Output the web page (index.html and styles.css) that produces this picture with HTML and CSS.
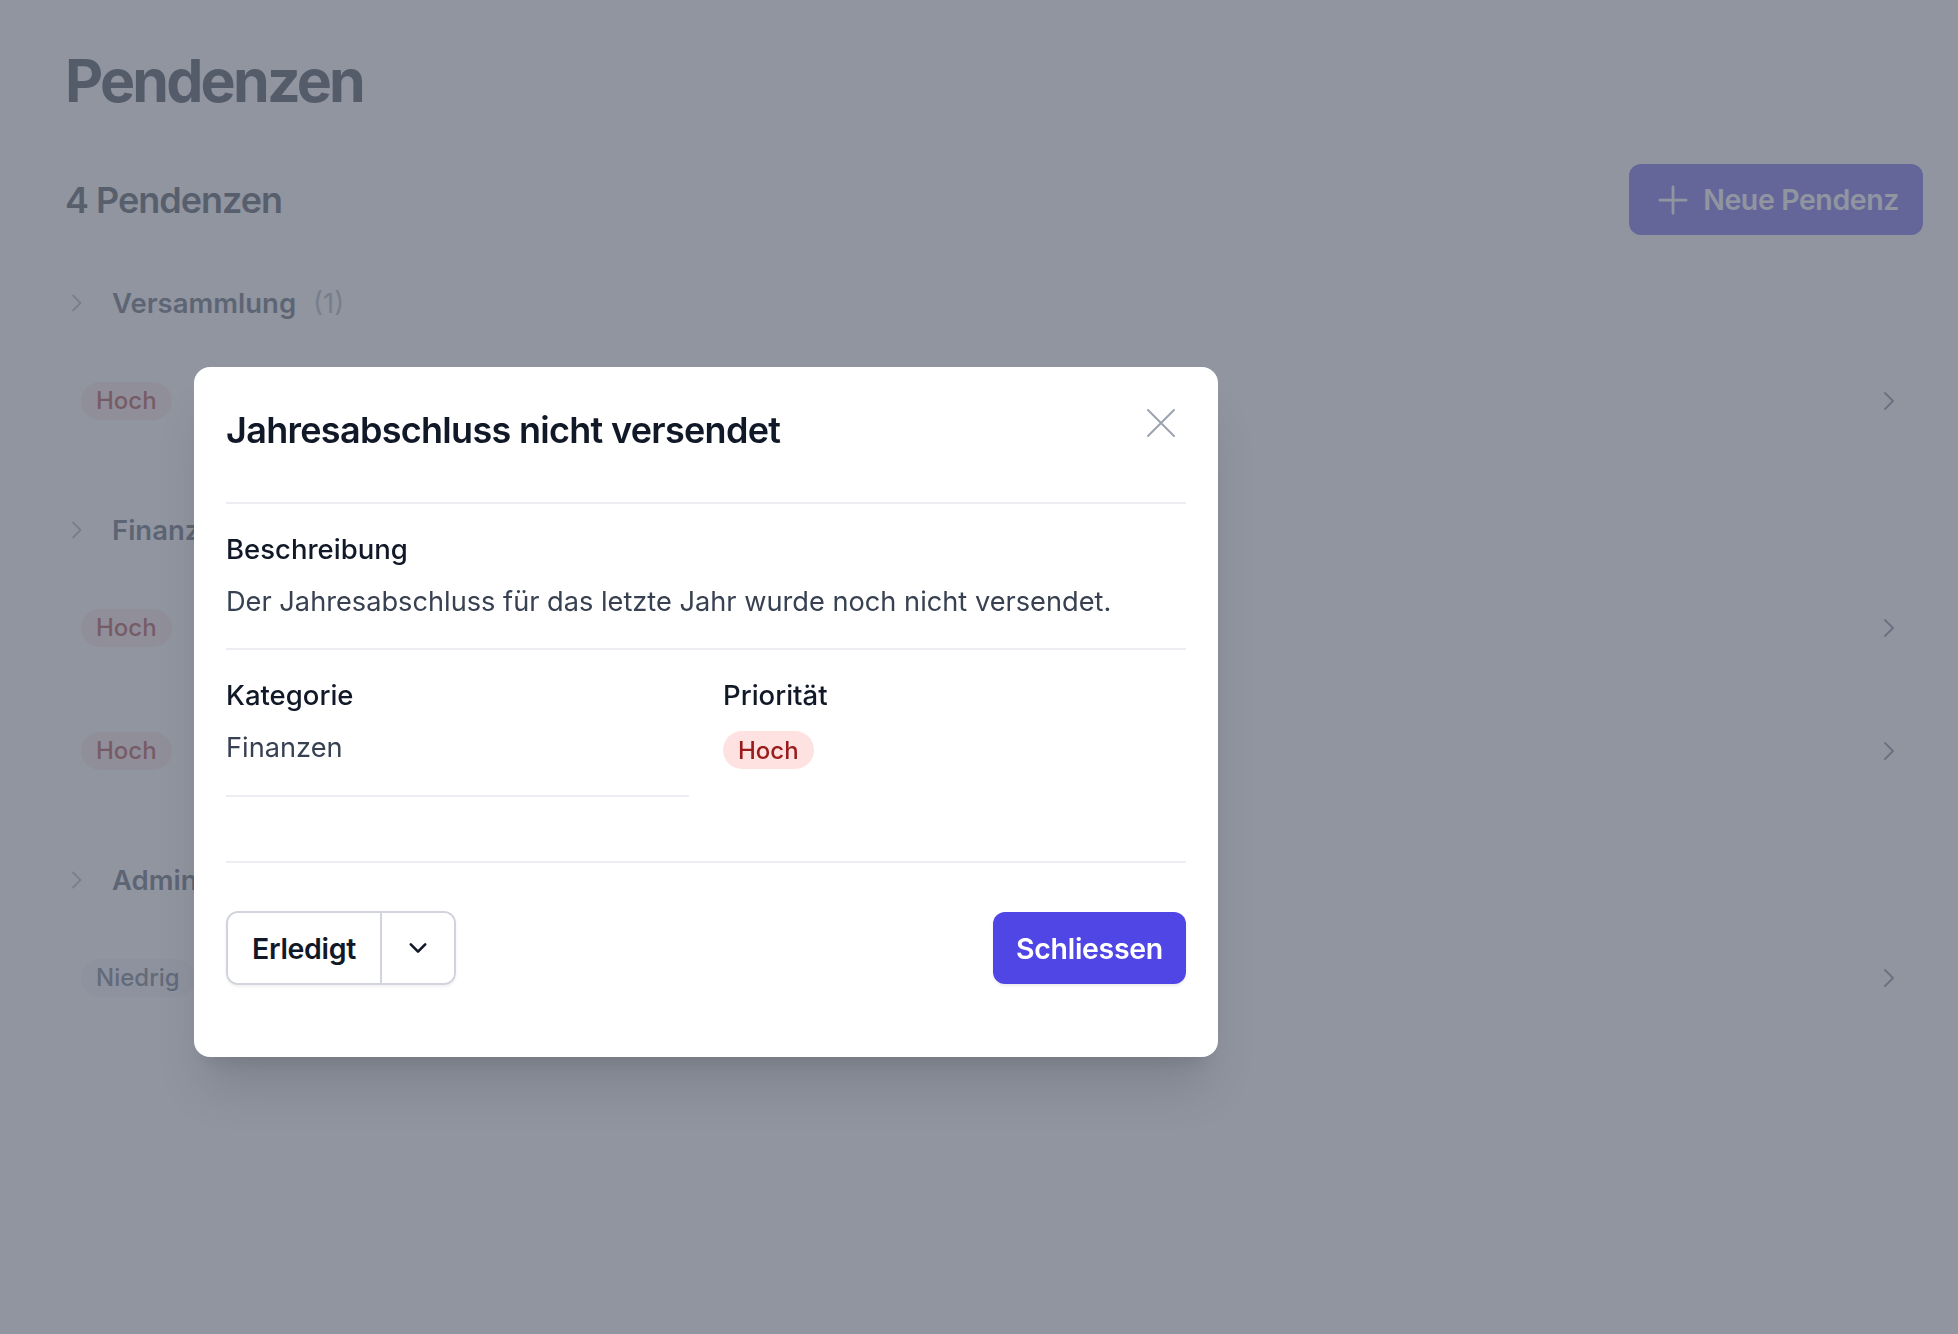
FILE: index.html
```html
<!DOCTYPE html>
<html lang="de">
<head>
<meta charset="utf-8">
<title>Pendenzen</title>
<link rel="stylesheet" href="styles.css">
</head>
<body>
<main class="page">
  <h1 class="page-title">Pendenzen</h1>
  <div class="toolbar">
    <h2 class="count">4 Pendenzen</h2>
    <button class="btn-new" type="button">
      <svg class="plus" viewBox="0 0 24 24" fill="none" stroke="currentColor" stroke-width="2.2" stroke-linecap="round"><path d="M12 1.5v21M1.5 12h21"/></svg>
      <span>Neue Pendenz</span>
    </button>
  </div>

  <section class="group">
    <div class="group-head">
      <svg class="chev-small" viewBox="0 0 14 18" fill="none" stroke="currentColor" stroke-width="1.8" stroke-linecap="round" stroke-linejoin="round"><path d="M3 1.5l7.5 7.5-7.5 7.5"/></svg>
      <span class="group-name">Versammlung</span><span class="group-count">(1)</span>
    </div>
    <ul class="rows">
      <li class="row">
        <span class="badge badge-high">Hoch</span>
        <svg class="chev-row" viewBox="0 0 16 20" fill="none" stroke="currentColor" stroke-width="2" stroke-linecap="round" stroke-linejoin="round"><path d="M4 2l8 8-8 8"/></svg>
      </li>
    </ul>
  </section>

  <section class="group">
    <div class="group-head">
      <svg class="chev-small" viewBox="0 0 14 18" fill="none" stroke="currentColor" stroke-width="1.8" stroke-linecap="round" stroke-linejoin="round"><path d="M3 1.5l7.5 7.5-7.5 7.5"/></svg>
      <span class="group-name">Finanzen</span><span class="group-count">(2)</span>
    </div>
    <ul class="rows">
      <li class="row">
        <span class="badge badge-high">Hoch</span>
        <svg class="chev-row" viewBox="0 0 16 20" fill="none" stroke="currentColor" stroke-width="2" stroke-linecap="round" stroke-linejoin="round"><path d="M4 2l8 8-8 8"/></svg>
      </li>
      <li class="row">
        <span class="badge badge-high">Hoch</span>
        <svg class="chev-row" viewBox="0 0 16 20" fill="none" stroke="currentColor" stroke-width="2" stroke-linecap="round" stroke-linejoin="round"><path d="M4 2l8 8-8 8"/></svg>
      </li>
    </ul>
  </section>

  <section class="group">
    <div class="group-head">
      <svg class="chev-small" viewBox="0 0 14 18" fill="none" stroke="currentColor" stroke-width="1.8" stroke-linecap="round" stroke-linejoin="round"><path d="M3 1.5l7.5 7.5-7.5 7.5"/></svg>
      <span class="group-name">Administration</span><span class="group-count">(1)</span>
    </div>
    <ul class="rows">
      <li class="row">
        <span class="badge badge-low">Niedrig</span>
        <svg class="chev-row" viewBox="0 0 16 20" fill="none" stroke="currentColor" stroke-width="2" stroke-linecap="round" stroke-linejoin="round"><path d="M4 2l8 8-8 8"/></svg>
      </li>
    </ul>
  </section>
</main>

<div class="overlay"></div>

<div class="modal" role="dialog" aria-modal="true">
  <div class="modal-head">
    <h3 class="modal-title">Jahresabschluss nicht versendet</h3>
    <button class="close" type="button" aria-label="Schliessen">
      <svg viewBox="0 0 30 30" fill="none" stroke="currentColor" stroke-width="2" stroke-linecap="round"><path d="M2 2l26 26M28 2L2 28"/></svg>
    </button>
  </div>
  <div class="modal-section">
    <div class="label">Beschreibung</div>
    <p class="value">Der Jahresabschluss für das letzte Jahr wurde noch nicht versendet.</p>
  </div>
  <div class="modal-grid">
    <div class="field field-line">
      <div class="label">Kategorie</div>
      <div class="value">Finanzen</div>
    </div>
    <div class="field">
      <div class="label">Priorität</div>
      <span class="badge badge-high badge-modal">Hoch</span>
    </div>
  </div>
  <div class="modal-foot">
    <div class="split">
      <button class="split-main" type="button">Erledigt</button>
      <button class="split-toggle" type="button" aria-label="Mehr">
        <svg viewBox="0 0 20 20" fill="none" stroke="currentColor" stroke-width="2.2" stroke-linecap="round" stroke-linejoin="round"><path d="M4 7l6 6 6-6"/></svg>
      </button>
    </div>
    <button class="btn-primary" type="button">Schliessen</button>
  </div>
</div>
</body>
</html>
```
FILE: styles.css
```css
* { box-sizing: border-box; }
html, body { margin: 0; padding: 0; }
body {
  background: #ffffff;
  font-family: Inter, "Noto Sans", "Liberation Sans", sans-serif;
  color: #111827;
  width: 1958px;
  height: 1334px;
  overflow: hidden;
}
button { font-family: inherit; cursor: pointer; }
ul { list-style: none; margin: 0; padding: 0; }

.page {
  padding: 41px 35px 0 65px;
}
.page-title {
  margin: 0;
  font-size: 59px;
  line-height: 80px;
  font-weight: 700;
  letter-spacing: -2.8px;
  color: #111827;
}
.toolbar {
  margin-top: 43px;
  display: flex;
  align-items: center;
  justify-content: space-between;
  height: 71px;
}
.count {
  margin: 0;
  font-size: 36px;
  font-weight: 600;
  letter-spacing: -1px;
  color: #1f2937;
}
.btn-new {
  display: flex;
  align-items: center;
  gap: 15px;
  height: 71px;
  padding: 0 24px 0 29px;
  border: none;
  border-radius: 12px;
  background: #4f46e5;
  color: #ffffff;
  font-size: 28.5px;
  font-weight: 600;
  letter-spacing: -0.4px;
}
.plus { width: 30px; height: 30px; }

.group { margin-top: 48px; }
.group-head {
  display: flex;
  align-items: center;
  height: 40px;
  color: #374151;
}
.chev-small {
  width: 14px; height: 18px;
  margin-left: 5px;
  margin-right: 28px;
  color: #9ca3af;
}
.group-name {
  font-size: 27.5px;
  font-weight: 600;
  color: #374151;
}
.group-count {
  margin-left: 17px;
  font-size: 27.5px;
  color: #9ca3af;
}
.rows { margin-top: 16px; }
.row {
  display: flex;
  align-items: center;
  height: 123px;
  padding: 0 26px 0 16px;
}
.chev-row {
  margin-left: auto;
  width: 16px; height: 20px;
  color: #6b7280;
}

.badge {
  display: inline-flex;
  align-items: center;
  height: 38px;
  padding: 0 15px;
  border-radius: 19px;
  font-size: 24px;
  font-weight: 500;
}
.badge-high { background: #fee2e2; color: #991b1b; }
.badge-low { background: #f3f4f6; color: #4b5563; }

.overlay {
  position: fixed;
  inset: 0;
  background: rgba(107, 114, 128, 0.75);
}

.modal {
  position: absolute;
  left: 194px;
  top: 367px;
  width: 1024px;
  padding: 0 32px;
  background: #ffffff;
  border-radius: 16px;
  box-shadow: 0 40px 50px -10px rgba(0,0,0,0.12), 0 16px 20px -12px rgba(0,0,0,0.1);
}
.modal-head {
  display: flex;
  justify-content: space-between;
  align-items: flex-start;
  padding: 41px 0 50px;
  border-bottom: 2px solid #eceef1;
}
.modal-title {
  margin: 0;
  font-size: 36px;
  line-height: 44px;
  font-weight: 600;
  letter-spacing: -0.7px;
  color: #111827;
}
.close {
  width: 30px; height: 30px;
  margin-right: 10px;
  padding: 0;
  border: none;
  background: none;
  color: #9ca3af;
}
.close svg { width: 30px; height: 30px; display: block; }

.label {
  font-size: 27.5px;
  line-height: 40px;
  font-weight: 500;
  color: #111827;
}
.value {
  margin: 13px 0 0;
  font-size: 27.2px;
  line-height: 40px;
  color: #374151;
}
.modal-section {
  padding: 25px 0 26px;
  border-bottom: 2px solid #eceef1;
}
.modal-grid {
  display: grid;
  grid-template-columns: 1fr 1fr;
  column-gap: 34px;
  padding: 25px 0 64px;
  align-items: start;
}
.field-line {
  padding-bottom: 27px;
  border-bottom: 2px solid #eceef1;
}
.badge-modal { margin-top: 16px; }

.modal-foot {
  display: flex;
  justify-content: space-between;
  align-items: center;
  padding: 48px 0 72px;
  border-top: 2px solid #eceef1;
}
.split {
  display: flex;
  height: 74px;
  border: 2px solid #d1d5db;
  border-radius: 12px;
  box-shadow: 0 2px 3px rgba(0,0,0,0.06);
  overflow: hidden;
}
.split-main {
  width: 154px;
  border: none;
  border-right: 2px solid #d1d5db;
  background: #ffffff;
  font-size: 28.5px;
  font-weight: 600;
  letter-spacing: -0.3px;
  color: #111827;
}
.split-toggle {
  width: 72px;
  border: none;
  background: #ffffff;
  color: #111827;
  display: flex;
  align-items: center;
  justify-content: center;
}
.split-toggle svg { width: 24px; height: 24px; }
.btn-primary {
  height: 72px;
  padding: 0 23px;
  border: none;
  border-radius: 12px;
  background: #4f46e5;
  color: #ffffff;
  font-size: 28.5px;
  font-weight: 600;
  letter-spacing: -0.3px;
  box-shadow: 0 2px 3px rgba(0,0,0,0.08);
}
```
